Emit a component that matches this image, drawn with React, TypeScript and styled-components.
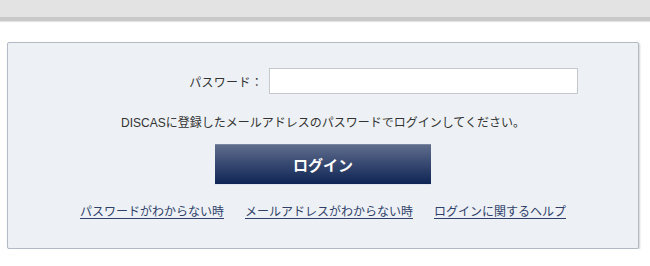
import styled, { createGlobalStyle } from "styled-components"

const GlobalStyle = createGlobalStyle`
  html, body {
    margin: 0;
    padding: 0;
    background: #ffffff;
  }
  body {
    font-family: "Liberation Sans", "Noto Sans CJK JP", sans-serif;
    font-size: 12px;
    color: #333333;
  }
`

const links = ["パスワードがわからない時", "メールアドレスがわからない時", "ログインに関するヘルプ"]

export default function App() {
  return (
    <>
      <GlobalStyle />
      <TopBar />
      <Page>
        <Panel>
          <FieldRow>
            <Label>パスワード：</Label>
            <Input type="password" />
          </FieldRow>
          <Note>DISCASに登録したメールアドレスのパスワードでログインしてください。</Note>
          <LoginButton>ログイン</LoginButton>
          <Links>
            {links.map((l) => (
              <HelpLink key={l} href="#">
                {l}
              </HelpLink>
            ))}
          </Links>
        </Panel>
      </Page>
    </>
  )
}

const TopBar = styled.div`
  height: 17px;
  background: #e3e3e3;
  border-bottom: 4px solid #c9c9c9;
  box-shadow: 0 1px 1px #e4e4e4;
`

const Page = styled.div`
  padding: 21px 11px 0 7px;
`

const Panel = styled.div`
  box-sizing: border-box;
  height: 207px;
  background: #edf1f6;
  border: 1px solid #b3bac4;
  border-radius: 2px;
  box-shadow: 1px 1px 2px rgba(0, 0, 0, 0.18);
  display: flex;
  flex-direction: column;
  align-items: center;
`

const FieldRow = styled.div`
  align-self: stretch;
  display: grid;
  grid-template-columns: 1fr 309px 54px;
  column-gap: 6px;
  align-items: center;
  margin-top: 25px;
`

const Label = styled.label`
  text-align: right;
  font-size: 12px;
  color: #333333;
  letter-spacing: 0.3px;
`

const Input = styled.input`
  box-sizing: border-box;
  height: 26px;
  border: 1px solid #c4c8cc;
  background: #ffffff;
  outline: none;
  margin: 0;
`

const Note = styled.p`
  margin: 21px 0 0;
  font-size: 12px;
  line-height: 16px;
  color: #333333;
`

const LoginButton = styled.button`
  margin-top: 13px;
  width: 216px;
  height: 40px;
  border: none;
  border-top: 1px solid #7b87a0;
  background: linear-gradient(to bottom, #5f6d8c 0%, #3a4b73 45%, #0e2554 100%);
  color: #ffffff;
  font-family: "Liberation Sans", "Noto Sans CJK JP", sans-serif;
  font-size: 15px;
  font-weight: bold;
  cursor: pointer;
  box-shadow: 0 1px 0 #dfe5ee;
`

const Links = styled.div`
  display: flex;
  gap: 21px;
  margin-top: 20px;
`

const HelpLink = styled.a`
  color: #2f3f6a;
  font-size: 12px;
  line-height: 16px;
  text-decoration: underline;
  text-underline-offset: 2px;
`
